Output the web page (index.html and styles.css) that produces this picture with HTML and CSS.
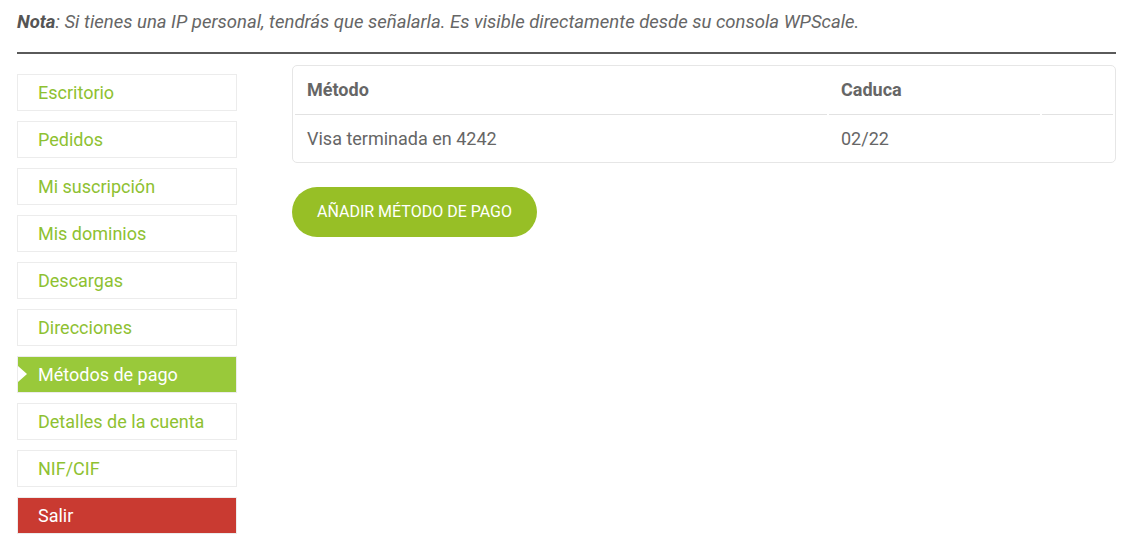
FILE: index.html
```html
<!DOCTYPE html>
<html lang="es">
<head>
    <meta charset="UTF-8">
    <meta name="viewport" content="width=device-width, initial-scale=1.0">
    <title>Métodos de pago</title>
    <link rel="stylesheet" href="styles.css">
</head>
<body>
    <div class="page">
        <p class="note"><strong>Nota</strong>: Si tienes una IP personal, tendrás que señalarla. Es visible directamente desde su consola WPScale.</p>
        <hr class="divider">

        <div class="account">
            <nav class="account-nav">
                <a href="#" class="nav-item">Escritorio</a>
                <a href="#" class="nav-item">Pedidos</a>
                <a href="#" class="nav-item">Mi suscripción</a>
                <a href="#" class="nav-item">Mis dominios</a>
                <a href="#" class="nav-item">Descargas</a>
                <a href="#" class="nav-item">Direcciones</a>
                <a href="#" class="nav-item active">Métodos de pago</a>
                <a href="#" class="nav-item">Detalles de la cuenta</a>
                <a href="#" class="nav-item">NIF/CIF</a>
                <a href="#" class="nav-item logout">Salir</a>
            </nav>

            <div class="account-content">
                <table class="methods-table">
                    <thead>
                        <tr>
                            <th class="col-method">Método</th>
                            <th class="col-expires">Caduca</th>
                            <th class="col-actions"></th>
                        </tr>
                    </thead>
                    <tbody>
                        <tr>
                            <td>Visa terminada en 4242</td>
                            <td>02/22</td>
                            <td></td>
                        </tr>
                    </tbody>
                </table>
                <a href="#" class="add-button">Añadir método de pago</a>
            </div>
        </div>
    </div>
</body>
</html>
```

FILE: styles.css
```css
body {
    margin: 0;
    background: #fff;
    font-family: Roboto, "Liberation Sans", Arial, sans-serif;
    color: #666;
}
.page {
    padding: 0 20px 0 17px;
}
.note {
    margin: 0;
    padding-top: 10px;
    font-size: 18.5px;
    line-height: 24px;
    font-style: italic;
    color: #666;
}
.note strong {
    color: #555;
}
.divider {
    margin: 18px 0 20px 0;
    border: none;
    border-top: 2px solid #5a5a5a;
    height: 0;
}
.account {
    display: flex;
    gap: 55px;
    align-items: flex-start;
}
.account-nav {
    display: flex;
    flex-direction: column;
    gap: 10px;
    width: 220px;
    flex-shrink: 0;
}
.nav-item {
    display: block;
    position: relative;
    height: 35px;
    line-height: 35px;
    padding-left: 20px;
    border: 1px solid #ececec;
    color: #8ec131;
    font-size: 18px;
    text-decoration: none;
}
.nav-item.active {
    background: #99c93a;
    color: #fff;
}
.nav-item.active:before {
    content: "";
    position: absolute;
    left: 0;
    top: 9px;
    border-top: 8px solid transparent;
    border-bottom: 8px solid transparent;
    border-left: 9px solid #fff;
}
.nav-item.logout {
    background: #c93a31;
    color: #fff;
}
.account-content {
    flex: 1;
    margin-top: -9px;
}
.methods-table {
    width: 100%;
    border: 1px solid #e6e6e6;
    border-radius: 5px;
    border-spacing: 2px;
    font-size: 18px;
    color: #666;
    margin-bottom: 24px;
}
.methods-table th,
.methods-table td {
    text-align: left;
    padding: 0 12px;
}
.methods-table th {
    height: 42px;
    padding-bottom: 4px;
    font-weight: bold;
    border-bottom: 1px solid #e2e2e2;
}
.methods-table td {
    height: 43px;
}
.col-method {
    width: 508px;
}
.col-expires {
    width: 187px;
}
.add-button {
    display: inline-block;
    height: 50px;
    line-height: 50px;
    padding: 0 25px;
    border-radius: 25px;
    background: #97bf26;
    color: #fff;
    font-size: 16px;
    text-transform: uppercase;
    text-decoration: none;
}
```
